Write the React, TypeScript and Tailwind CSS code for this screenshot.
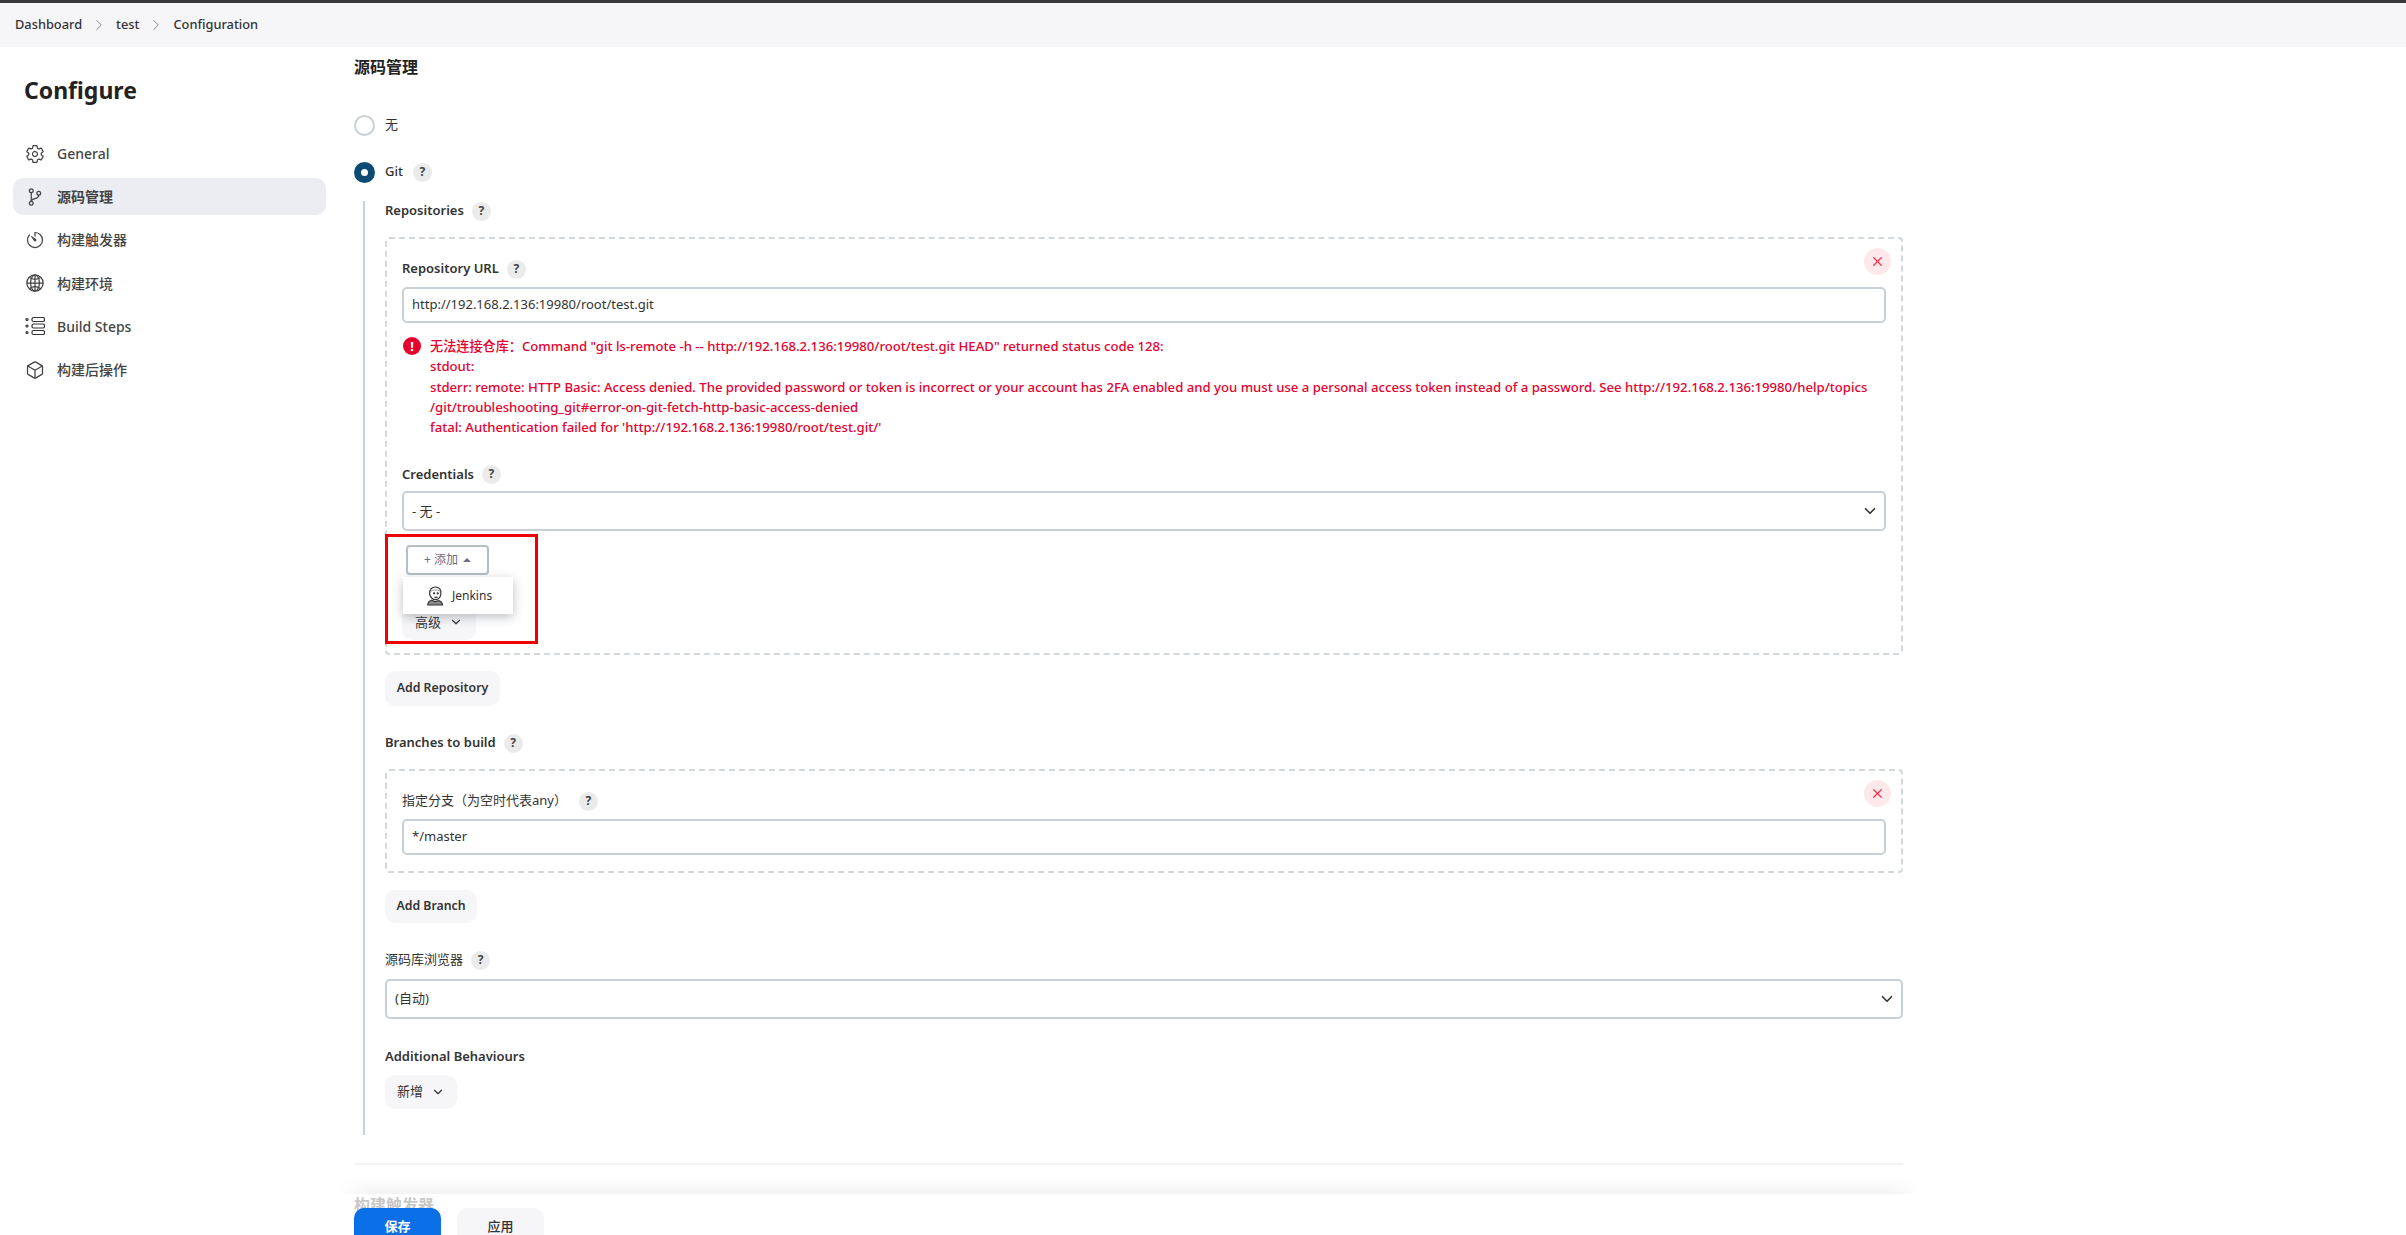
import { ReactNode } from "react";
import { ChevronDown, ChevronRight, X } from "lucide-react";
import {
  IoCubeOutline,
  IoGitBranchOutline,
  IoGlobeOutline,
  IoSettingsOutline,
  IoTimerOutline,
} from "react-icons/io5";

function BuildStepsIcon() {
  return (
    <svg viewBox="0 0 20 20" className="w-5 h-5" fill="none" stroke="#333" strokeWidth="1.2">
      <rect x="7" y="1.500" width="12.500" height="4" rx="1.500" />
      <rect x="7" y="8" width="12.500" height="4" rx="1.500" />
      <rect x="7" y="14.500" width="12.500" height="4" rx="1.500" />
      <circle cx="2" cy="3.500" r="1" />
      <circle cx="2" cy="10" r="1" />
      <circle cx="2" cy="16.500" r="1" />
    </svg>
  );
}

function JenkinsIcon() {
  return (
    <svg viewBox="0 0 20 22" className="w-[18px] h-[20px]" fill="none" stroke="#333" strokeWidth="1.3">
      <path d="M4 9c-.6-5 2.500-8 6.500-8s7 3 6 8c-.5 3-2 5.500-5 6-3.500.4-6.800-2.500-7.500-6z" fill="#fff" />
      <path d="M5 6c2-2 7-2.500 10.500-.5" strokeWidth="1" stroke="#888" />
      <circle cx="9" cy="8" r=".6" fill="#333" />
      <circle cx="13" cy="8" r=".6" fill="#333" />
      <path d="M9.500 12c1 .7 2.300.7 3.300 0" />
      <path d="M2 21c0-2.500 1.500-4.500 4.500-5.500l3.500 2 4-1.500c2.500.8 4 2.500 4.500 5z" fill="#8a8a8a" />
    </svg>
  );
}

function Help() {
  return (
    <span className="w-[19px] h-[19px] rounded-full bg-[#ebebeb] flex items-center justify-center text-[12px] font-bold text-[#444] leading-none">
      ?
    </span>
  );
}

function Label({ children, bold = true }: { children: ReactNode; bold?: boolean }) {
  return (
    <div className={`flex items-center gap-2 text-[13px] text-[#333] h-5 ${bold ? "font-semibold" : ""}`}>
      {children}
    </div>
  );
}

function TextBox({ value }: { value: string }) {
  return (
    <div className="h-[36px] border-2 border-[#c9d1d6] rounded-[5px] flex items-center px-2 text-[13px] text-[#333] bg-white">
      {value}
    </div>
  );
}

function SelectBox({ value }: { value: string }) {
  return (
    <div className="h-[40px] border-2 border-[#c9d1d6] rounded-[5px] flex items-center justify-between pl-2 pr-[5px] text-[13px] text-[#333] bg-white">
      <span>{value}</span>
      <ChevronDown size={18} strokeWidth={2.2} className="text-[#333]" />
    </div>
  );
}

function RemoveButton() {
  return (
    <span className="absolute top-[9px] right-[10px] w-[27px] h-[27px] rounded-full bg-[#fde8ea] flex items-center justify-center text-[#f5304f]">
      <X size={15} strokeWidth={2} />
    </span>
  );
}

function SoftButton({ children, className }: { children: ReactNode; className: string }) {
  return (
    <div className={`rounded-[10px] bg-[#f6f6f8] flex items-center justify-center text-[#333] ${className}`}>
      {children}
    </div>
  );
}

const navItems = [
  { label: "General", icon: <IoSettingsOutline size={20} /> },
  { label: "源码管理", icon: <IoGitBranchOutline size={20} />, active: true },
  { label: "构建触发器", icon: <IoTimerOutline size={20} /> },
  { label: "构建环境", icon: <IoGlobeOutline size={20} /> },
  { label: "Build Steps", icon: <BuildStepsIcon /> },
  { label: "构建后操作", icon: <IoCubeOutline size={20} /> },
];

export default function App() {
  return (
    <div
      className="relative h-[1235px] overflow-hidden bg-white text-[#333]"
      style={{ fontFamily: '"Noto Sans", "Noto Sans CJK SC", sans-serif' }}
    >
      <div className="h-[3px] bg-[#3a3a3c]" />
      <div className="h-[44px] bg-[#f6f6f8] flex items-center pl-[15px] text-[12.800px] font-medium text-[#333]">
        <span>Dashboard</span>
        <ChevronRight size={18} strokeWidth={1.3} className="mx-[8px] text-[#888]" />
        <span>test</span>
        <ChevronRight size={18} strokeWidth={1.3} className="mx-[8px] text-[#888]" />
        <span>Configuration</span>
      </div>

      <div className="flex">
        <aside className="w-[354px] shrink-0 pl-[13px]">
          <h1 className="text-[23px] font-bold text-[#222] pl-[11px] mt-[27px] leading-[32px]">Configure</h1>
          <nav className="mt-[29px] w-[313px] flex flex-col gap-[6px]">
            {navItems.map((item) => (
              <div
                key={item.label}
                className={`h-[37.200px] rounded-[10px] flex items-center gap-[12px] pl-[12px] text-[14px] font-medium text-[#444] ${
                  item.active ? "bg-[#ecedf2] font-semibold" : ""
                }`}
              >
                <span className="w-5 h-5 flex items-center justify-center">{item.icon}</span>
                {item.label}
              </div>
            ))}
          </nav>
        </aside>

        <main className="w-[1549px]">
          <h2 className="text-[16px] font-bold text-[#222] mt-[8px] leading-6">源码管理</h2>

          <div className="flex items-center gap-[10px] mt-[36px] h-5 text-[13px]">
            <span className="w-[21px] h-[21px] rounded-full border-2 border-[#c9d1d6] bg-white" />
            无
          </div>
          <div className="flex items-center gap-[10px] mt-[27px] h-5 text-[13px] font-medium">
            <span className="w-[21px] h-[21px] rounded-full bg-[#0b4a72] flex items-center justify-center">
              <span className="w-[7px] h-[7px] rounded-full bg-white" />
            </span>
            Git
            <Help />
          </div>

          <div className="ml-[9px] mt-[19px] border-l-2 border-[#c9d1d6] pl-[20px] h-[934px]">
            <Label>
              Repositories
              <Help />
            </Label>

            <div className="relative mt-[16px] h-[418px] border-2 border-dashed border-[#d2d8dc] rounded-[4px] pl-[15px] pr-[15px] pt-[20px]">
              <RemoveButton />
              <Label>
                Repository URL
                <Help />
              </Label>
              <div className="mt-[8px]">
                <TextBox value="http://192.168.2.136:19980/root/test.git" />
              </div>
              <div className="flex mt-[13px] gap-[9px] text-[13.150px] leading-[20.300px] text-[#e6002e] font-medium">
                <span className="w-[18px] h-[18px] mt-[1px] ml-[1px] rounded-full bg-[#e6002e] text-white text-[13px] font-bold leading-[18px] text-center shrink-0">
                  !
                </span>
                <div>
                  <div>无法连接仓库：Command "git ls-remote -h -- http://192.168.2.136:19980/root/test.git HEAD" returned status code 128:</div>
                  <div>stdout:</div>
                  <div>stderr: remote: HTTP Basic: Access denied. The provided password or token is incorrect or your account has 2FA enabled and you must use a personal access token instead of a password. See http://192.168.2.136:19980/help/topics</div>
                  <div>/git/troubleshooting_git#error-on-git-fetch-http-basic-access-denied</div>
                  <div>fatal: Authentication failed for 'http://192.168.2.136:19980/root/test.git/'</div>
                </div>
              </div>
              <div className="mt-[27px]">
                <Label>
                  Credentials
                  <Help />
                </Label>
              </div>
              <div className="mt-[7px]">
                <SelectBox value="- 无 -" />
              </div>
              <div className="mt-[14px] ml-[4px] w-[83px] h-[30px] border-2 border-[#b4bfc6] rounded-[4px] flex items-center justify-center gap-[5px] text-[12px] text-[#6b6b85]">
                + 添加
                <span className="w-0 h-0 border-x-[4px] border-x-transparent border-b-[4px] border-b-[#6b6b85]" />
              </div>
              <SoftButton className="w-[74px] h-[36px] mt-[29px] gap-2 text-[13px]">
                高级
                <ChevronDown size={14} />
              </SoftButton>

              <div className="absolute left-[16px] top-[338px] w-[110px] h-[37px] bg-white shadow-[0_3px_10px_rgba(60,70,80,0.35)] flex items-center gap-[8px] pl-[23px] text-[12px]">
                <JenkinsIcon />
                Jenkins
              </div>
              <div className="absolute left-[-2px] top-[295px] w-[153px] h-[110px] border-[3px] border-[#f00000]" />
            </div>

            <SoftButton className="w-[115px] h-[35px] mt-[16px] text-[12.300px] font-semibold">Add Repository</SoftButton>

            <div className="mt-[27px]">
              <Label>
                Branches to build
                <Help />
              </Label>
            </div>
            <div className="relative mt-[16px] h-[104px] border-2 border-dashed border-[#d2d8dc] rounded-[4px] px-[15px] pt-[20px]">
              <RemoveButton />
              <Label bold={false}>
                <span className="mr-[4px]">指定分支（为空时代表any）</span>
                <Help />
              </Label>
              <div className="mt-[8px]">
                <TextBox value="*/master" />
              </div>
            </div>

            <SoftButton className="w-[92px] h-[33px] mt-[17px] text-[12.300px] font-semibold">Add Branch</SoftButton>

            <div className="mt-[27px]">
              <Label bold={false}>
                源码库浏览器
                <Help />
              </Label>
            </div>
            <div className="mt-[9px]">
              <SelectBox value="(自动)" />
            </div>
            <div className="mt-[28px]">
              <Label>Additional Behaviours</Label>
            </div>
            <SoftButton className="w-[72px] h-[34px] mt-[8px] gap-2 text-[13px]">
              新增
              <ChevronDown size={14} />
            </SoftButton>
          </div>

          <div className="mt-[28px] h-[2px] bg-[#f3f3f5]" />
          <h2 className="text-[16px] font-bold text-[#222] mt-[28px] leading-6">构建触发器</h2>
        </main>
      </div>

      {/* sticky save bar: its shadow only shows above the top edge */}
      <div className="absolute left-[300px] top-[1150px] w-[1660px] h-[44px] overflow-hidden">
        <div className="absolute left-[54px] top-[44px] w-[1549px] h-[41px] shadow-[0_0_24px_rgba(0,0,0,0.1)]" />
      </div>
      <div className="absolute left-[354px] top-[1194px] w-[1549px] h-[41px] bg-white/75" />
      <div className="absolute left-[354px] top-[1208px] flex gap-[16px] text-[13px]">
        <div className="w-[87px] h-[38px] rounded-[10px] bg-[#0b6fe8] text-white font-semibold flex items-center justify-center">
          保存
        </div>
        <div className="w-[87px] h-[38px] rounded-[10px] bg-[#f6f6f8] flex items-center justify-center font-medium">
          应用
        </div>
      </div>
    </div>
  );
}
